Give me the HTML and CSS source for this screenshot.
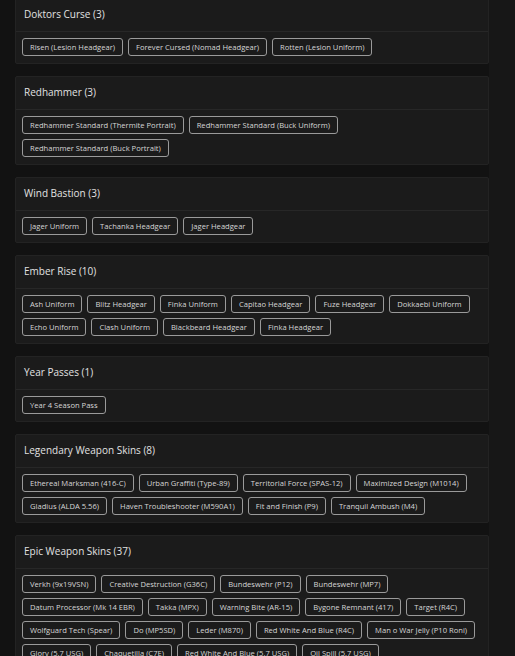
FILE: index.html
```html
<!DOCTYPE html>
<html lang="en">
<head>
    <meta charset="UTF-8">
    <meta name="viewport" content="width=device-width, initial-scale=1.0">
    <title>Inventory</title>
    <link rel="stylesheet" href="styles.css">
</head>
<body>
<div class="page">
    <div class="main">
        <div class="list">

            <!-- Doktors Curse -->
            <div class="card">
                <div class="card-head">Doktors Curse (3)</div>
                <div class="tags">
                    <span class="tag">Risen (Lesion Headgear)</span>
                    <span class="tag">Forever Cursed (Nomad Headgear)</span>
                    <span class="tag">Rotten (Lesion Uniform)</span>
                </div>
            </div>

            <!-- Redhammer -->
            <div class="card">
                <div class="card-head">Redhammer (3)</div>
                <div class="tags">
                    <span class="tag">Redhammer Standard (Thermite Portrait)</span>
                    <span class="tag">Redhammer Standard (Buck Uniform)</span>
                    <span class="tag">Redhammer Standard (Buck Portrait)</span>
                </div>
            </div>

            <!-- Wind Bastion -->
            <div class="card">
                <div class="card-head">Wind Bastion (3)</div>
                <div class="tags">
                    <span class="tag">Jager Uniform</span>
                    <span class="tag">Tachanka Headgear</span>
                    <span class="tag">Jager Headgear</span>
                </div>
            </div>

            <!-- Ember Rise -->
            <div class="card">
                <div class="card-head">Ember Rise (10)</div>
                <div class="tags">
                    <span class="tag">Ash Uniform</span>
                    <span class="tag">Blitz Headgear</span>
                    <span class="tag">Finka Uniform</span>
                    <span class="tag">Capitao Headgear</span>
                    <span class="tag">Fuze Headgear</span>
                    <span class="tag">Dokkaebi Uniform</span>
                    <span class="tag">Echo Uniform</span>
                    <span class="tag">Clash Uniform</span>
                    <span class="tag">Blackbeard Headgear</span>
                    <span class="tag">Finka Headgear</span>
                </div>
            </div>

            <!-- Year Passes -->
            <div class="card">
                <div class="card-head">Year Passes (1)</div>
                <div class="tags">
                    <span class="tag">Year 4 Season Pass</span>
                </div>
            </div>

            <!-- Legendary Weapon Skins -->
            <div class="card">
                <div class="card-head">Legendary Weapon Skins (8)</div>
                <div class="tags">
                    <span class="tag">Ethereal Marksman (416-C)</span>
                    <span class="tag">Urban Graffiti (Type-89)</span>
                    <span class="tag">Territorial Force (SPAS-12)</span>
                    <span class="tag">Maximized Design (M1014)</span>
                    <span class="tag">Gladius (ALDA 5.56)</span>
                    <span class="tag">Haven Troubleshooter (M590A1)</span>
                    <span class="tag">Fit and Finish (P9)</span>
                    <span class="tag">Tranquil Ambush (M4)</span>
                </div>
            </div>

            <!-- Epic Weapon Skins -->
            <div class="card">
                <div class="card-head">Epic Weapon Skins (37)</div>
                <div class="tags">
                    <span class="tag">Verkh (9x19VSN)</span>
                    <span class="tag">Creative Destruction (G36C)</span>
                    <span class="tag">Bundeswehr (P12)</span>
                    <span class="tag">Bundeswehr (MP7)</span>
                    <span class="tag">Datum Processor (Mk 14 EBR)</span>
                    <span class="tag">Takka (MPX)</span>
                    <span class="tag">Warning Bite (AR-15)</span>
                    <span class="tag">Bygone Remnant (417)</span>
                    <span class="tag">Target (R4C)</span>
                    <span class="tag">Wolfguard Tech (Spear)</span>
                    <span class="tag">Do (MP5SD)</span>
                    <span class="tag">Leder (M870)</span>
                    <span class="tag">Red White And Blue (R4C)</span>
                    <span class="tag">Man o War Jelly (P10 Roni)</span>
                    <span class="tag">Glory (5.7 USG)</span>
                    <span class="tag">Chaquetilla (C7E)</span>
                    <span class="tag">Red White And Blue (5.7 USG)</span>
                    <span class="tag">Oil Spill (5.7 USG)</span>
                </div>
            </div>

        </div>
    </div>
    <div class="side"></div>
</div>
</body>
</html>
```

FILE: styles.css
```css
html, body {
    margin: 0;
    height: 100%;
    overflow: hidden;
}

body {
    background-color: #121212;
    font-family: "Open Sans", "Liberation Sans", sans-serif;
    color: #d8d8d8;
}

.page {
    display: flex;
    min-height: 100%;
}

.main {
    width: 489px;
    padding-left: 15px;
    box-sizing: border-box;
    background-color: #121212;
}

.side {
    flex: 1;
    background-color: #171717;
}

/* 卡片列表 */
.list {
    display: flex;
    flex-direction: column;
    gap: 12px;
    margin-top: -2px;
}

.card {
    background-color: #1b1b1b;
    border: 1px solid #232323;
    border-radius: 2px;
}

.card-head {
    padding: 10px 8px 11px 8px;
    font-size: 10px;
    line-height: 11px;
    font-weight: 500;
    color: #e2e2e2;
    border-bottom: 1px solid #272727;
}

.tags {
    display: flex;
    flex-wrap: wrap;
    gap: 5px;
    padding: 6px 6px 7px 6px;
}

.tag {
    display: inline-block;
    height: 18px;
    line-height: 16px;
    box-sizing: border-box;
    padding: 0 7px;
    border: 1px solid #9a9a9a;
    border-radius: 3px;
    font-size: 7.6px;
    color: #d6d6d6;
    white-space: nowrap;
}
```
